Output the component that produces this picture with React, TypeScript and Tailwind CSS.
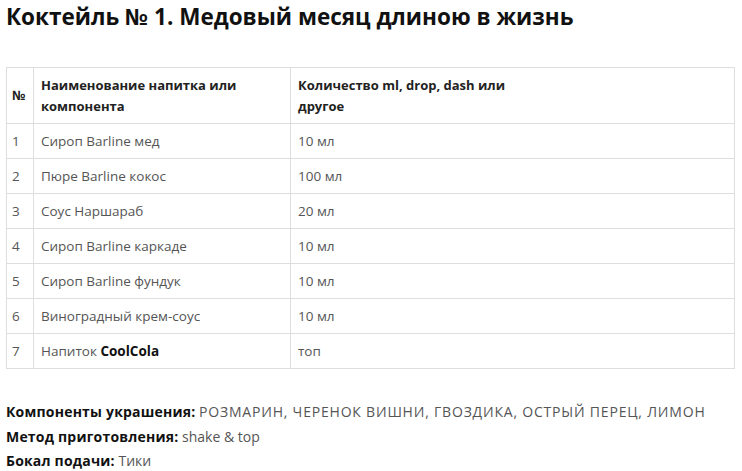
const rows: [string, React.ReactNode, string][] = [
  ["1", "Сироп Barline мед", "10 мл"],
  ["2", "Пюре Barline кокос", "100 мл"],
  ["3", "Соус Наршараб", "20 мл"],
  ["4", "Сироп Barline каркаде", "10 мл"],
  ["5", "Сироп Barline фундук", "10 мл"],
  ["6", "Виноградный крем-соус", "10 мл"],
  [
    "7",
    <>
      Напиток <b className="font-bold text-[#111]">CoolCola</b>
    </>,
    "топ",
  ],
];

export default function App() {
  return (
    <div className="min-h-screen bg-white px-[6px] pt-[3px] font-['Open_Sans',sans-serif] text-[#333]">
      <h1 className="text-[22.5px] font-bold leading-[28px] text-[#111]">
        Коктейль № 1. Медовый месяц длиною в жизнь
      </h1>

      <table className="mt-[36px] w-[729px] border-collapse text-[13px] text-[#555]">
        <thead>
          <tr className="h-[56px]">
            <th className="w-[27px] border border-[#dedede] px-[5px] text-left font-bold text-[#222]">№</th>
            <th className="w-[257px] border border-[#dedede] px-[7px] text-left font-bold leading-[21px] text-[#222]">
              Наименование напитка или
              <br />
              компонента
            </th>
            <th className="border border-[#dedede] px-[7px] text-left font-bold leading-[21px] text-[#222]">
              Количество ml, drop, dash или
              <br />
              другое
            </th>
          </tr>
        </thead>
        <tbody className="text-[13.5px]">
          {rows.map(([n, name, amount]) => (
            <tr key={n} className="h-[35px]">
              <td className="border border-[#dedede] px-[5px]">{n}</td>
              <td className="border border-[#dedede] px-[7px]">{name}</td>
              <td className="border border-[#dedede] px-[7px]">{amount}</td>
            </tr>
          ))}
        </tbody>
      </table>

      <div className="mt-[31px] text-[14px] leading-[24.5px] text-[#555]">
        <p>
          <b className="font-bold tracking-[0.2px] text-[#111]">Компоненты украшения:</b>{" "}
          <span className="tracking-[0.8px]">РОЗМАРИН, ЧЕРЕНОК ВИШНИ, ГВОЗДИКА, ОСТРЫЙ ПЕРЕЦ, ЛИМОН</span>
        </p>
        <p>
          <b className="font-bold tracking-[0.2px] text-[#111]">Метод приготовления:</b> shake &amp; top
        </p>
        <p>
          <b className="font-bold tracking-[0.2px] text-[#111]">Бокал подачи:</b> Тики
        </p>
      </div>
    </div>
  );
}
